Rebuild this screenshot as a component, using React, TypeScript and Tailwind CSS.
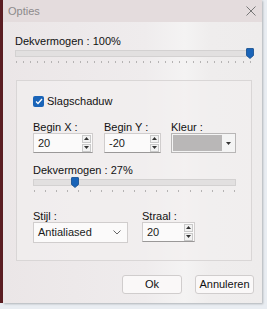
import React from "react";

const font = { fontFamily: '"Liberation Sans", Arial, sans-serif' };

function Thumb() {
  return (
    <svg width="8" height="11" viewBox="0 0 8 11" className="block">
      <path d="M0.5 1 Q0.5 0.5 1 0.5 H7 Q7.5 0.5 7.5 1 V7.5 L4 10.5 L0.5 7.5 Z" fill="#1a64b8" stroke="#124b8c" strokeWidth="0.8" />
    </svg>
  );
}

function Slider({ width, pos, ticks }: { width: number; pos: number; ticks: number }) {
  const items = Array.from({ length: ticks });
  return (
    <div className="relative" style={{ width }}>
      <div className="h-[7px] border border-[#d3d1d1] bg-[#e2e0e0]" />
      <div className="absolute top-[-2px]" style={{ left: pos }}>
        <Thumb />
      </div>
      <div className="mt-[4px] flex justify-between px-[1px]">
        {items.map((_, i) => (
          <div key={i} className="h-[2px] w-[1px] bg-[#b5b3b3]" />
        ))}
      </div>
    </div>
  );
}

function SpinBtns() {
  return (
    <div className="flex flex-col gap-[1px] pr-[1px]">
      <div className="flex h-[8px] w-[9px] items-center justify-center border border-[#c9c9c9] bg-[#f2f2f2]">
        <svg width="5" height="3" viewBox="0 0 5 3"><path d="M0 3 L2.5 0 L5 3 Z" fill="#333" /></svg>
      </div>
      <div className="flex h-[8px] w-[9px] items-center justify-center border border-[#c9c9c9] bg-[#f2f2f2]">
        <svg width="5" height="3" viewBox="0 0 5 3"><path d="M0 0 L2.5 3 L5 0 Z" fill="#333" /></svg>
      </div>
    </div>
  );
}

function Spin({ value, width }: { value: string; width: number }) {
  return (
    <div className="flex h-[20px] items-center justify-between border border-[#d0cdcd] border-b-[#9a9898] bg-[#fbfafa] pl-[4px]" style={{ width }}>
      <span className="text-[11px] text-[#1a1a1a]">{value}</span>
      <SpinBtns />
    </div>
  );
}

const label = "text-[11px] leading-[13px] text-[#111]";

export default function App() {
  return (
    <div className="relative h-[309px] w-[267px] overflow-hidden bg-[#e9edf2]" style={font}>
      <div className="flex h-[303px]">
        <div className="w-[3px] bg-[#5b1d22]" />
        <div className="flex w-[259px] flex-col bg-[linear-gradient(90deg,#ebe6e7_0%,#efeced_55%,#f4f3f3_70%,#efeded_80%,#eeecec_100%)] shadow-[1px_1px_2px_rgba(0,0,0,0.25)]">
          <div className="flex h-[22px] items-center justify-between bg-[#e4dcdd] pl-[5px] pr-[6px]">
            <span className="text-[11px] text-[#8c8a8b]">Opties</span>
            <svg width="10" height="10" viewBox="0 0 10 10"><path d="M0.5 0.5 L9.5 9.5 M9.5 0.5 L0.5 9.5" stroke="#777" strokeWidth="1" /></svg>
          </div>
          <div className="flex flex-col pl-[12px]">
            <div className={`mt-[13px] ${label}`}>Dekvermogen : 100%</div>
            <div className="mt-[2px]">
              <Slider width={237} pos={231} ticks={34} />
            </div>
            <div className="ml-[1px] mt-[17px] flex h-[181px] w-[236px] flex-col border border-[#d9d6d6] bg-[#f2f0f0]/70 pl-[16px]">
              <div className="mt-[14px] flex items-center gap-[3px]">
                <div className="flex h-[11px] w-[11px] items-center justify-center rounded-[2px] bg-[#1a64b8]">
                  <svg width="8" height="7" viewBox="0 0 8 7"><path d="M1 3.5 L3 5.5 L7 1" stroke="white" strokeWidth="1.3" fill="none" /></svg>
                </div>
                <span className={label}>Slagschaduw</span>
              </div>
              <div className="mt-[13px] flex">
                <div className="flex flex-col">
                  <span className={label}>Begin X :</span>
                  <div className="mt-[-1px]"><Spin value="20" width={60} /></div>
                </div>
                <div className="ml-[11px] flex flex-col">
                  <span className={label}>Begin Y :</span>
                  <div className="mt-[-1px]"><Spin value="-20" width={57} /></div>
                </div>
                <div className="ml-[10px] flex flex-col">
                  <span className={label}>Kleur :</span>
                  <div className="mt-[-1px] flex h-[20px] w-[65px] items-center border border-[#b8b6b6] bg-[#f4f4f4] p-[1px]">
                    <div className="h-full flex-1 bg-[#b9b7b7]" />
                    <div className="flex w-[12px] items-center justify-center">
                      <svg width="5" height="3" viewBox="0 0 5 3"><path d="M0 0 L2.5 3 L5 0 Z" fill="#333" /></svg>
                    </div>
                  </div>
                </div>
              </div>
              <div className={`mt-[11px] ${label}`}>Dekvermogen : 27%</div>
              <div className="mt-[2px]">
                <Slider width={203} pos={38} ticks={19} />
              </div>
              <div className="mt-[18px] flex">
                <div className="flex flex-col">
                  <span className={label}>Stijl :</span>
                  <div className="mt-[-1px] flex h-[21px] w-[95px] items-center justify-between border border-[#d0cdcd] bg-[#fbfafa] pl-[4px] pr-[6px]">
                    <span className="text-[11px] text-[#1a1a1a]">Antialiased</span>
                    <svg width="8" height="5" viewBox="0 0 8 5"><path d="M0.5 0.5 L4 4 L7.5 0.5" stroke="#666" fill="none" strokeWidth="1" /></svg>
                  </div>
                </div>
                <div className="ml-[14px] flex flex-col">
                  <span className={label}>Straal :</span>
                  <div className="mt-[-1px]"><Spin value="20" width={53} /></div>
                </div>
              </div>
            </div>
            <div className="mt-[14px] flex justify-end gap-[13px] pr-[8px]">
              <div className="flex h-[19px] w-[60px] items-center justify-center rounded-[3px] border border-[#d0cdcd] bg-[#faf8f8] text-[11px] text-[#111]">Ok</div>
              <div className="flex h-[19px] w-[59px] items-center justify-center rounded-[3px] border border-[#d0cdcd] bg-[#faf8f8] text-[11px] text-[#111]">Annuleren</div>
            </div>
          </div>
        </div>
      </div>
    </div>
  );
}
